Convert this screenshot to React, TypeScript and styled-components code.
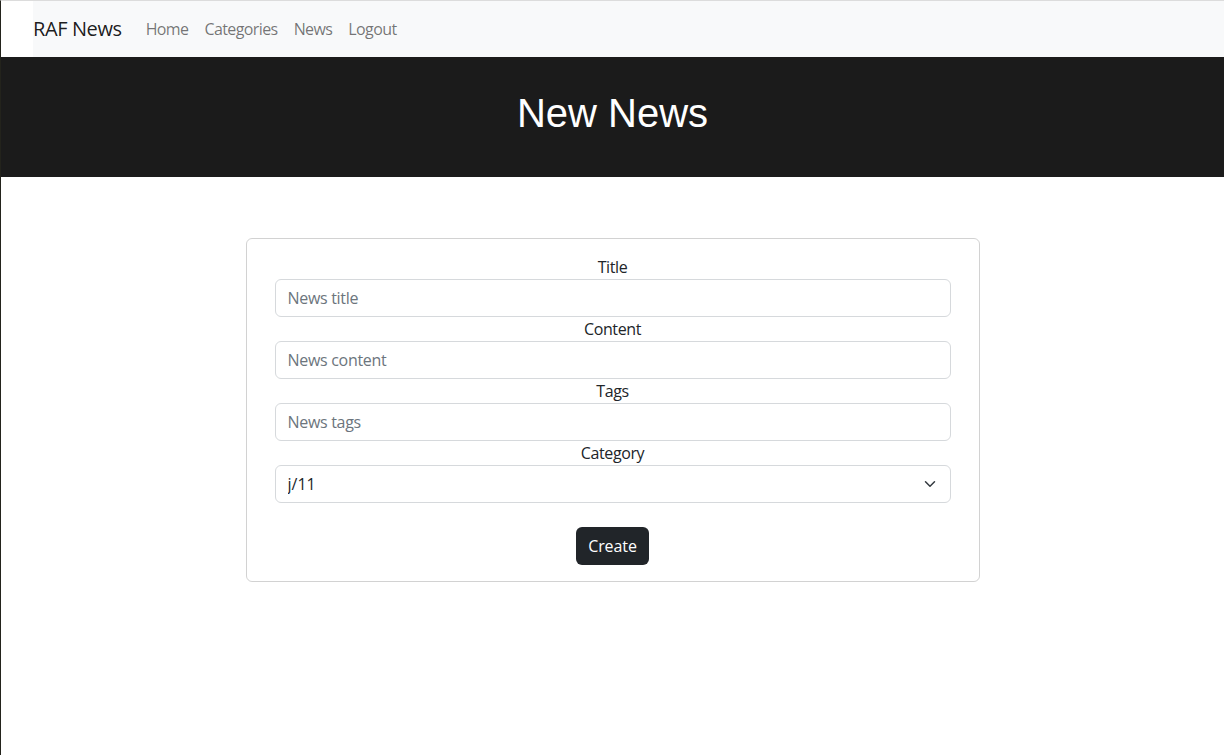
import React from "react";
import styled, { createGlobalStyle } from "styled-components";

const Global = createGlobalStyle`
  html, body { margin: 0; padding: 0; background: #fff; }
  body {
    font-family: "Open Sans", "Noto Sans", sans-serif;
    font-size: 16px;
    color: #212529;
  }
  * { box-sizing: border-box; }
`;

const Page = styled.div`
  min-height: 755px;
  border-left: 1px solid #23231c;
  border-top: 1px solid #dcdcdc;
  display: flex;
  flex-direction: column;
`;

const NavBar = styled.nav`
  height: 56px;
  display: flex;
  background: #fff;
`;

const NavInner = styled.div`
  flex: 1;
  margin-left: 32px;
  background: #f8f9fa;
  display: flex;
  align-items: center;
`;

const Brand = styled.a`
  font-size: 20px;
  color: rgba(0, 0, 0, 0.9);
  text-decoration: none;
  margin-right: 16px;
  line-height: 30px;
  letter-spacing: -0.4px;
`;

const NavLinks = styled.div`
  display: flex;
`;

const NavLink = styled.a`
  color: rgba(0, 0, 0, 0.55);
  text-decoration: none;
  padding: 8px;
  font-size: 16px;
  letter-spacing: -0.6px;
`;

const Hero = styled.header`
  height: 120px;
  background: #1b1b1b;
  display: flex;
  align-items: center;
  justify-content: center;
  padding-bottom: 8px;
`;

const HeroTitle = styled.h1`
  margin: 0;
  color: #fff;
  font-family: "Liberation Sans", Arial, sans-serif;
  font-weight: 400;
  font-size: 40px;
`;

const Main = styled.main`
  display: flex;
  justify-content: center;
  padding-top: 61px;
`;

const Card = styled.form`
  width: 734px;
  border: 1px solid rgba(0, 0, 0, 0.175);
  border-radius: 6px;
  padding: 16px 28px 16px;
  display: flex;
  flex-direction: column;
  align-items: stretch;
`;

const Label = styled.label`
  text-align: center;
  line-height: 24px;
  font-size: 16px;
  letter-spacing: -0.4px;
`;

const Input = styled.input`
  height: 38px;
  border: 1px solid #d6d9dc;
  border-radius: 6px;
  padding: 6px 12px;
  font-family: inherit;
  font-size: 16px;
  letter-spacing: -0.3px;
  color: #212529;
  outline: none;
  &::placeholder { color: #6c757d; }
`;

const SelectWrap = styled.div`
  position: relative;
  display: flex;
`;

const Select = styled.select`
  flex: 1;
  height: 38px;
  border: 1px solid #d6d9dc;
  border-radius: 6px;
  padding: 6px 36px 6px 12px;
  font-family: inherit;
  font-size: 16px;
  color: #212529;
  background: #fff;
  appearance: none;
  outline: none;
`;

const Chevron = styled.svg`
  position: absolute;
  right: 13px;
  top: 13px;
  pointer-events: none;
`;

const ButtonRow = styled.div`
  display: flex;
  justify-content: center;
  margin-top: 24px;
`;

const Button = styled.button`
  height: 38px;
  padding: 6px 12px;
  border: none;
  border-radius: 6px;
  background: #212529;
  color: #fff;
  font-family: inherit;
  font-size: 16px;
  letter-spacing: -0.1px;
`;

export default function App() {
  return (
    <>
      <Global />
      <Page>
        <NavBar>
          <NavInner>
            <Brand href="#">RAF News</Brand>
            <NavLinks>
              <NavLink href="#">Home</NavLink>
              <NavLink href="#">Categories</NavLink>
              <NavLink href="#">News</NavLink>
              <NavLink href="#">Logout</NavLink>
            </NavLinks>
          </NavInner>
        </NavBar>
        <Hero>
          <HeroTitle>New News</HeroTitle>
        </Hero>
        <Main>
          <Card onSubmit={(e) => e.preventDefault()}>
            <Label>Title</Label>
            <Input placeholder="News title" />
            <Label>Content</Label>
            <Input placeholder="News content" />
            <Label>Tags</Label>
            <Input placeholder="News tags" />
            <Label>Category</Label>
            <SelectWrap>
              <Select defaultValue="j/11">
                <option value="j/11">j/11</option>
              </Select>
              <Chevron width="16" height="12" viewBox="0 0 16 16">
                <path
                  d="M2 5l6 6 6-6"
                  fill="none"
                  stroke="#343a40"
                  strokeWidth="2"
                  strokeLinecap="round"
                  strokeLinejoin="round"
                />
              </Chevron>
            </SelectWrap>
            <ButtonRow>
              <Button type="submit">Create</Button>
            </ButtonRow>
          </Card>
        </Main>
      </Page>
    </>
  );
}
